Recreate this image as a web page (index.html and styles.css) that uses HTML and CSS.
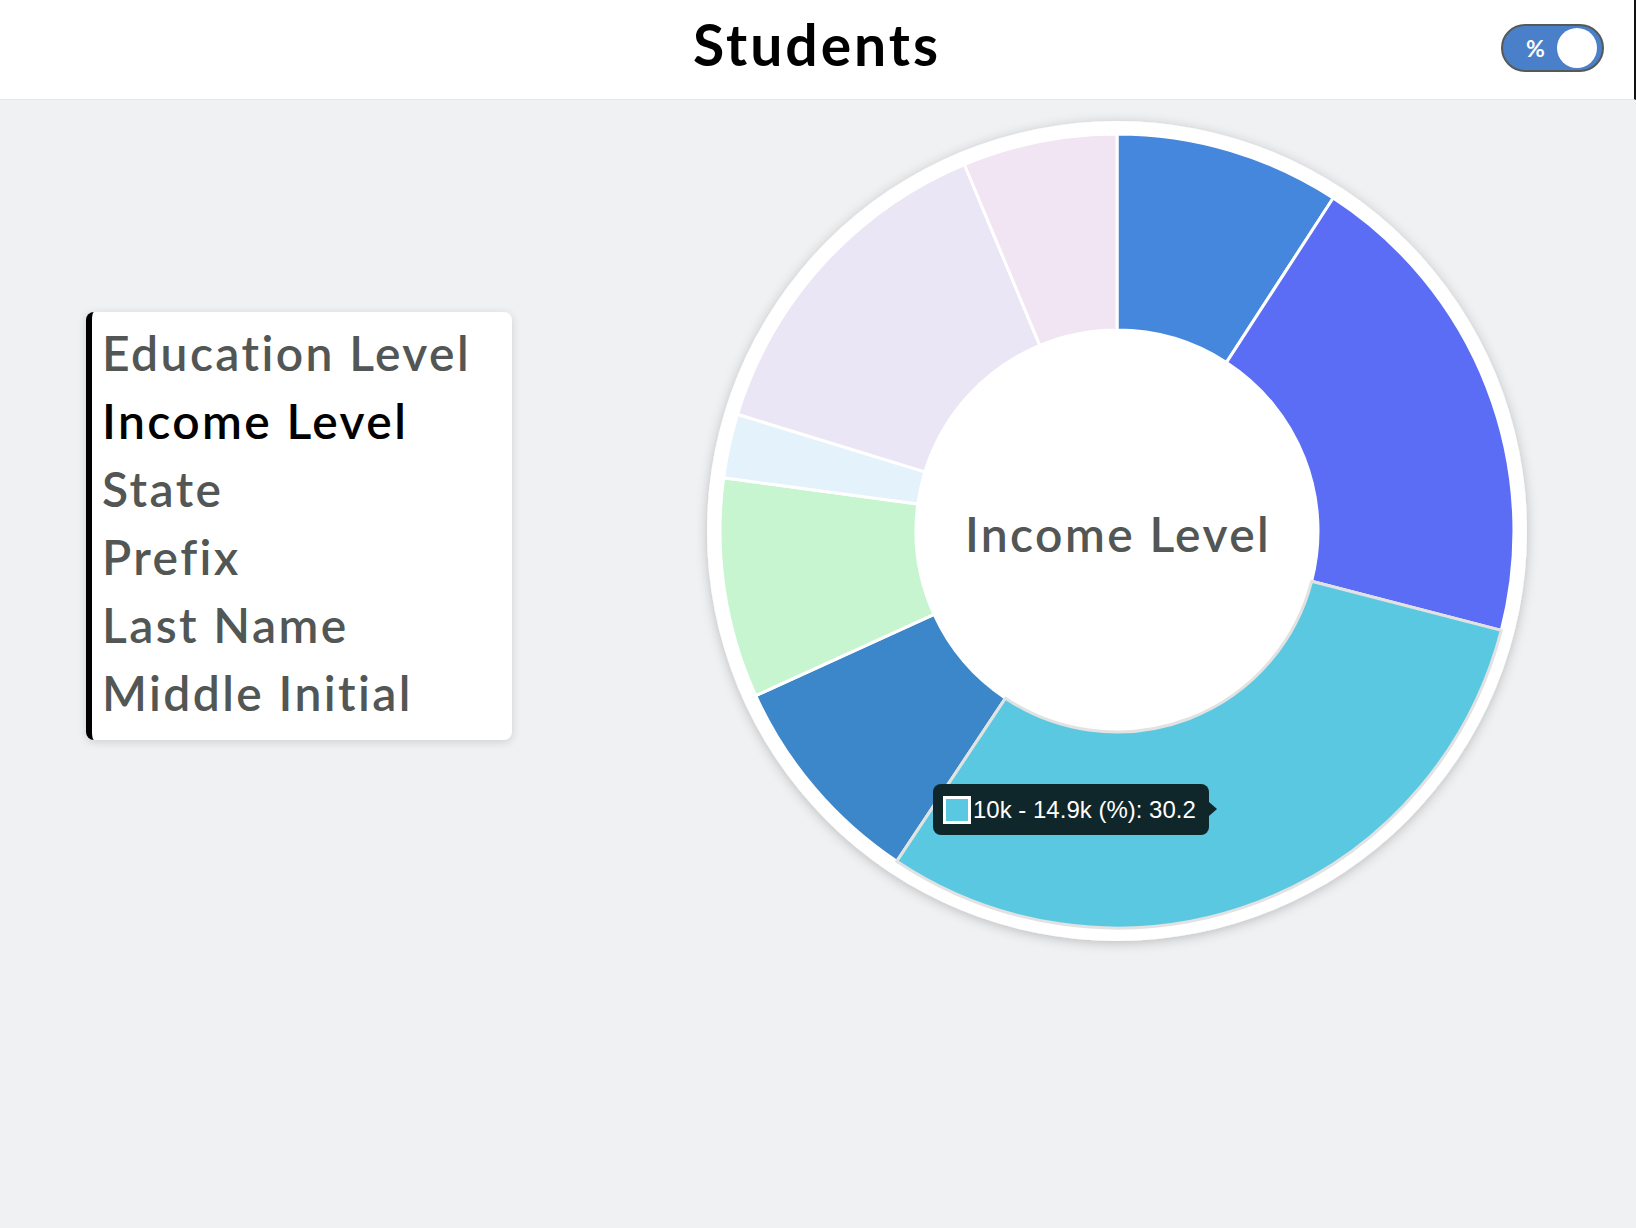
FILE: index.html
```html
<!DOCTYPE html>
<html lang="en">
<head>
<meta charset="utf-8">
<title>Students</title>
<link rel="stylesheet" href="styles.css">
</head>
<body>
<header class="topbar">
  <div class="topbar-spacer"></div>
  <h1 class="title">Students</h1>
  <div class="toggle">
    <span class="toggle-label">%</span>
    <span class="toggle-knob"></span>
  </div>
</header>
<main class="main">
  <ul class="menu">
    <li class="menu-item">Education Level</li>
    <li class="menu-item is-active">Income Level</li>
    <li class="menu-item">State</li>
    <li class="menu-item">Prefix</li>
    <li class="menu-item">Last Name</li>
    <li class="menu-item">Middle Initial</li>
  </ul>
  <div class="chart">
    <svg class="donut" width="860" height="862" viewBox="0 0 860 862">
      <defs>
        <filter id="shadow" x="-10%" y="-10%" width="120%" height="120%">
          <feDropShadow dx="0" dy="2" stdDeviation="6" flood-color="#000" flood-opacity="0.22"/>
        </filter>
      </defs>
      <circle class="plate" cx="430" cy="431" r="410" filter="url(#shadow)"/>
      <path class="slice s1" d="M430 34 A397 397 0 0 1 646.2 98 L539.5 262.4 A201 201 0 0 0 430 230 Z"/>
      <path class="slice s2" d="M646.2 98 A397 397 0 0 1 814.3 530.4 L624.6 481.3 A201 201 0 0 0 539.5 262.4 Z"/>
      <path class="slice s4" d="M209.7 761.3 A397 397 0 0 1 68.7 595.6 L247.1 514.4 A201 201 0 0 0 318.5 598.2 Z"/>
      <path class="slice s5" d="M68.7 595.6 A397 397 0 0 1 36.6 377.8 L230.8 404.1 A201 201 0 0 0 247.1 514.4 Z"/>
      <path class="slice s6" d="M36.6 377.8 A397 397 0 0 1 50.5 314.3 L237.9 371.9 A201 201 0 0 0 230.8 404.1 Z"/>
      <path class="slice s7" d="M50.5 314.3 A397 397 0 0 1 277.4 64.5 L352.8 245.4 A201 201 0 0 0 237.9 371.9 Z"/>
      <path class="slice s8" d="M277.4 64.5 A397 397 0 0 1 430 34 L430 230 A201 201 0 0 0 352.8 245.4 Z"/>
      <path class="slice s3 is-hover" d="M814.3 530.4 A397 397 0 0 1 209.7 761.3 L318.5 598.2 A201 201 0 0 0 624.6 481.3 Z"/>
      <text class="center-label" x="431" y="452">Income Level</text>
    </svg>
    <div class="tooltip">
      <span class="tooltip-swatch"></span>
      <span class="tooltip-text">10k - 14.9k (%): 30.2</span>
    </div>
  </div>
</main>
</body>
</html>
```
FILE: styles.css
```css
html, body {
  margin: 0;
  padding: 0;
}
body {
  background: #f0f1f3;
  font-family: Lato, "Noto Sans", sans-serif;
  min-height: 1228px;
  overflow: hidden;
}
.topbar {
  height: 99px;
  background: #ffffff;
  border-bottom: 1px solid #e4e5e7;
  border-right: 2px solid #111;
  display: grid;
  grid-template-columns: 1fr auto 1fr;
  align-items: start;
}
.title {
  margin: 0;
  padding-top: 16px;
  font-family: Lato, sans-serif;
  font-weight: 700;
  font-size: 57px;
  line-height: 56px;
  color: #000;
  letter-spacing: 3px;
}
.toggle {
  justify-self: end;
  margin-top: 24px;
  margin-right: 30px;
  width: 99px;
  height: 44px;
  border: 2px solid #555a59;
  border-radius: 26px;
  background: #4a80c9;
  display: flex;
  align-items: center;
  box-sizing: content-box;
}
.toggle-label {
  color: #fff;
  font-family: Lato, sans-serif;
  font-weight: 700;
  font-size: 23px;
  margin-left: 23px;
  width: 27px;
}
.toggle-knob {
  width: 40px;
  height: 40px;
  border-radius: 50%;
  background: #fff;
  margin-left: 4px;
}
.main {
  display: flex;
  align-items: flex-start;
  padding-left: 86px;
}
.menu {
  list-style: none;
  margin: 212px 0 0 0;
  padding: 7px 0 13px 10px;
  width: 410px;
  background: #fff;
  border-left: 6px solid #000;
  border-radius: 8px;
  box-shadow: 0 2px 10px rgba(0, 0, 0, 0.14);
}
.menu-item {
  font-family: Lato, sans-serif;
  font-weight: 600;
  font-size: 48px;
  line-height: 68px;
  letter-spacing: 2.4px;
  color: #525654;
  white-space: nowrap;
}
.menu-item.is-active {
  color: #000;
}
.chart {
  position: relative;
  margin-left: 175px;
  width: 860px;
  height: 862px;
}
.donut {
  display: block;
}
.plate {
  fill: #fff;
}
.slice {
  stroke: #fff;
  stroke-width: 3;
  stroke-linejoin: round;
}
.s1 { fill: #4587dc; }
.s2 { fill: #5b6cf5; }
.s3 { fill: #5bc8e2; }
.s4 { fill: #3c87c9; }
.s5 { fill: #c6f5cf; }
.s6 { fill: #e4f2fc; }
.s7 { fill: #ebe6f5; }
.s8 { fill: #f1e4f3; }
.slice.is-hover {
  stroke: #e2e2e2;
  stroke-width: 3;
}
.center-label {
  font-family: Lato, sans-serif;
  font-weight: 600;
  font-size: 48px;
  letter-spacing: 2.4px;
  fill: #525654;
  text-anchor: middle;
}
.tooltip {
  position: absolute;
  left: 246px;
  top: 684px;
  height: 51px;
  padding: 0 13px 0 10px;
  background: #0f262b;
  border-radius: 8px;
  display: flex;
  align-items: center;
  gap: 2px;
}
.tooltip::after {
  content: "";
  position: absolute;
  right: -8px;
  top: 18px;
  border-top: 7px solid transparent;
  border-bottom: 7px solid transparent;
  border-left: 8px solid #0f262b;
}
.tooltip-swatch {
  width: 22px;
  height: 22px;
  border: 3px solid #fff;
  background: #5bc8e2;
}
.tooltip-text {
  font-family: "Liberation Sans", Arial, sans-serif;
  font-size: 24px;
  color: #fff;
  white-space: nowrap;
}
```
